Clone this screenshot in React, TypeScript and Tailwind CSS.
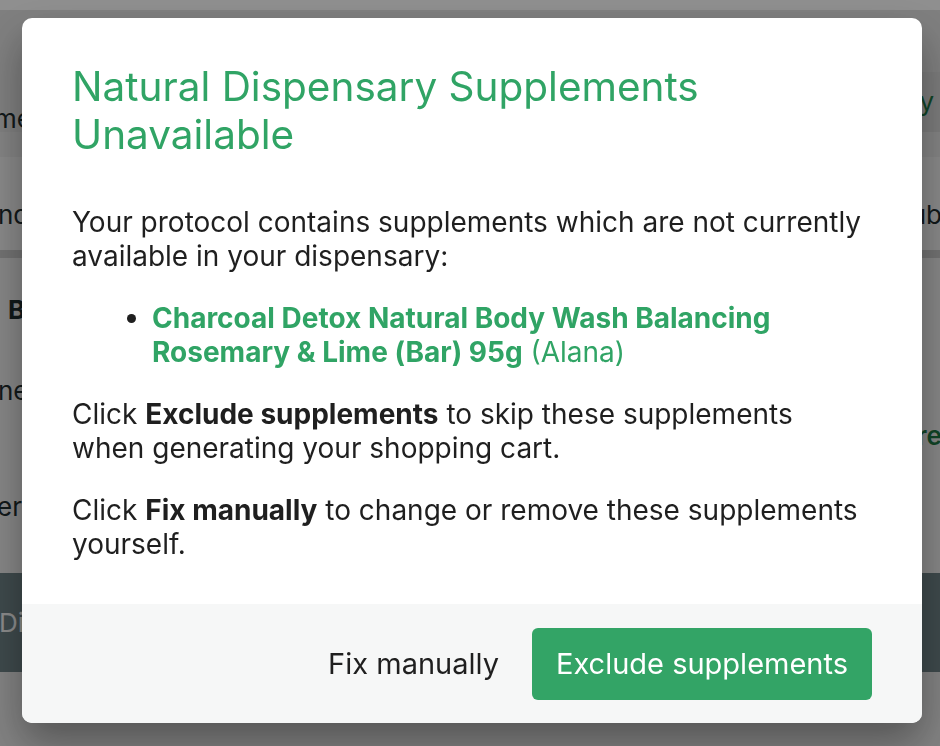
import React from "react";

function BackgroundPage() {
  return (
    <div className="h-[746px] w-[940px] overflow-hidden bg-white text-[26px] text-[#1f2d2f]">
      <div className="h-[10px] bg-white" />
      <div className="flex h-[122px] items-start justify-between bg-[#e3e3e3]">
        <span className="-ml-[6px] mt-[92px] leading-[34px]">mendations</span>
        <span className="mt-[62px] bg-[#dcdcdc] pl-3 pr-[6px] leading-[60px] text-[#1e7a45]">Pharmacy</span>
      </div>
      <div className="h-[25px] bg-[#eaeaea]" />
      <div className="flex h-[93px] items-center justify-between bg-[#f4f4f4] pt-[22px]">
        <span className="-ml-[2px]">nd name</span>
        <span className="-mr-[2px]">Sub</span>
      </div>
      <div className="h-[8px] bg-[#cbcbcb]" />
      <div className="flex h-[315px] flex-col bg-[#efefef]">
        <span className="mt-[32px] ml-[8px] font-bold">B</span>
        <span className="mt-[42px] -ml-[2px]">ne</span>
        <div className="flex justify-end">
          <span className="mt-[6px] -mr-[2px] font-semibold text-[#1e7a45]">Store</span>
        </div>
        <span className="mt-[32px] -ml-[3px]">er</span>
      </div>
      <div className="flex h-[99px] items-center bg-[#6f8387] text-[#f8f8f8]">
        <span className="-ml-[1px]">Di</span>
      </div>
      <div className="h-[74px] bg-[#e8e8e8]" />
    </div>
  );
}

export default function App() {
  return (
    <div className="relative h-[746px] w-[940px] overflow-hidden font-['Inter',_'Liberation_Sans',_sans-serif]">
      <BackgroundPage />
      <div className="fixed inset-0 flex items-start bg-[rgba(0,0,0,0.44)] pl-[22px] pt-[18px]">
        <div className="w-[900px] overflow-hidden rounded-[10px] bg-white shadow-[0_20px_40px_rgba(0,0,0,0.35)]">
          <div className="px-[50px] pb-[43px] pt-[45px] text-[28px] leading-[34px] text-[#1f1f1f]">
            <h2 className="text-[40.5px] leading-[48px] font-normal text-[#30a465]">
              Natural Dispensary Supplements Unavailable
            </h2>
            <p className="mt-[46px]">
              Your protocol contains supplements which are not currently available in your dispensary:
            </p>
            <ul className="mt-[28px] list-disc pl-[80px] marker:text-[#1f1f1f]">
              <li className="text-[#30a465]">
                <span className="font-bold">Charcoal Detox Natural Body Wash Balancing Rosemary &amp; Lime (Bar) 95g</span>{" "}
                (Alana)
              </li>
            </ul>
            <p className="mt-[28px]">
              Click <span className="font-bold">Exclude supplements</span> to skip these supplements when generating your shopping cart.
            </p>
            <p className="mt-[28px]">
              Click <span className="font-bold">Fix manually</span> to change or remove these supplements yourself.
            </p>
          </div>
          <div className="flex items-center justify-end gap-[33px] bg-[#f6f7f7] pb-[23px] pr-[50px] pt-[24px] text-[29px] leading-[34px]">
            <button className="text-[#1f1f1f]">Fix manually</button>
            <button className="rounded-[6px] bg-[#33a466] px-[24px] py-[19px] text-white">
              Exclude supplements
            </button>
          </div>
        </div>
      </div>
    </div>
  );
}
